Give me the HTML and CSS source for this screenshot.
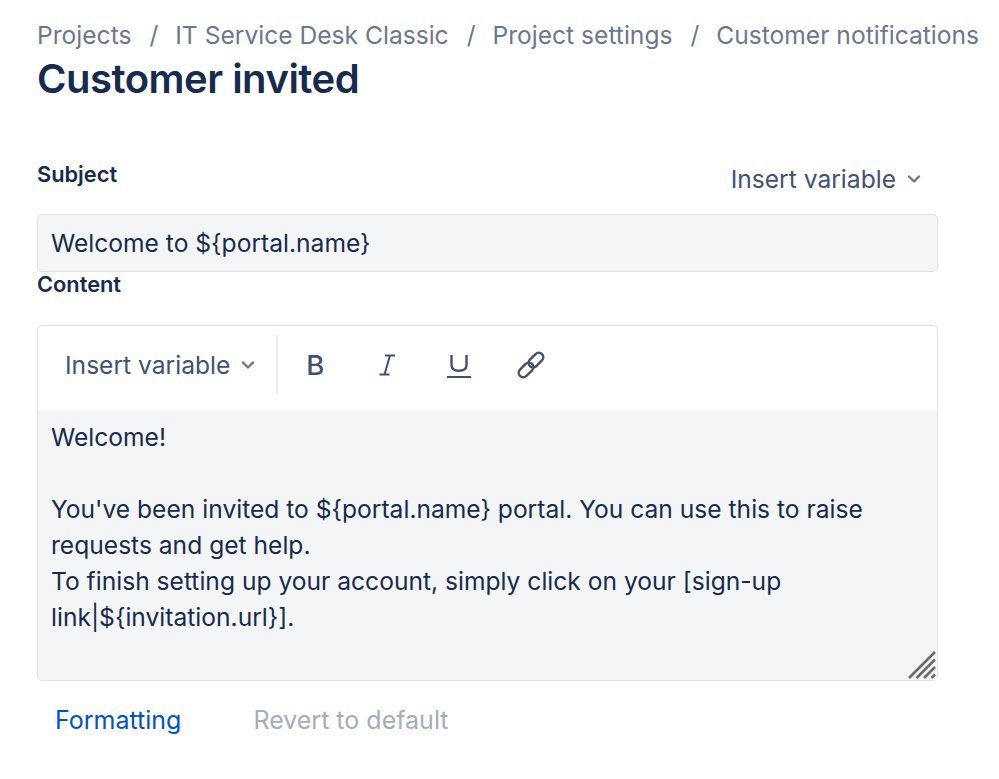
FILE: index.html
```html
<!DOCTYPE html>
<html lang="en">
<head>
    <meta charset="UTF-8">
    <meta name="viewport" content="width=device-width, initial-scale=1.0">
    <title>Customer invited</title>
    <link rel="stylesheet" href="styles.css">
</head>
<body>
    <div class="page">
        <nav class="breadcrumbs">
            <span>Projects</span><span class="sep">/</span>
            <span>IT Service Desk Classic</span><span class="sep">/</span>
            <span>Project settings</span><span class="sep">/</span>
            <span>Customer notifications</span>
        </nav>
        <h1>Customer invited</h1>

        <div class="subject-head">
            <label class="field-label">Subject</label>
            <div class="insert-var">
                Insert variable
                <svg class="chevron" viewBox="0 0 14 10" width="14" height="10"><path d="M2 2.500 7 7.500 12 2.500" fill="none" stroke="#6b778c" stroke-width="2.400" stroke-linecap="round" stroke-linejoin="round"/></svg>
            </div>
        </div>
        <div class="subject-input">Welcome to ${portal.name}</div>

        <label class="field-label content-label">Content</label>
        <div class="editor">
            <div class="toolbar">
                <div class="insert-var toolbar-var">
                    Insert variable
                    <svg class="chevron" viewBox="0 0 14 10" width="14" height="10"><path d="M2 2.500 7 7.500 12 2.500" fill="none" stroke="#6b778c" stroke-width="2.400" stroke-linecap="round" stroke-linejoin="round"/></svg>
                </div>
                <div class="tools">
                    <span class="tool tool-bold">B</span>
                    <span class="tool"><svg viewBox="0 0 24 24" width="24" height="24"><path d="M10 2.500h10M4.500 21.500h10M15 2.500 9.500 21.500" fill="none" stroke="#42526e" stroke-width="2"/></svg></span>
                    <span class="tool"><svg viewBox="0 0 24 28" width="24" height="28"><path d="M4.500 4v10c0 3.600 2.600 5.800 7.500 5.800s7.500-2.200 7.500-5.800V4" fill="none" stroke="#42526e" stroke-width="2.400"/><path d="M0 26h24" stroke="#42526e" stroke-width="2"/></svg></span>
                    <span class="tool"><svg viewBox="0 0 28 28" width="28" height="28"><g fill="none" stroke="#42526e" stroke-width="2.400" transform="rotate(-45 14 14)"><rect x="-1.500" y="9.500" width="17" height="9" rx="4.500"/><rect x="12.500" y="9.500" width="17" height="9" rx="4.500"/></g></svg></span>
                </div>
            </div>
            <div class="editor-body">
                <p>Welcome!</p>
                <p>&nbsp;</p>
                <p>You've been invited to ${portal.name} portal. You can use this to raise<br>requests and get help.</p>
                <p>To finish setting up your account, simply click on your [sign-up<br>link|${invitation.url}].</p>
                <svg class="grip" viewBox="0 0 28 28" width="28" height="28"><path d="M1 27 27 1M8.500 27 27 8.500M16 27 27 16M23.500 27 27 23.500" stroke="#6b6b6b" stroke-width="2.600"/></svg>
            </div>
        </div>

        <div class="actions">
            <a class="link">Formatting</a>
            <a class="link-disabled">Revert to default</a>
        </div>
    </div>
</body>
</html>
```

FILE: styles.css
```css
body {
    font-family: Inter, "Liberation Sans", sans-serif;
    font-size: 24.6px;
    line-height: 36px;
    color: #172b4d;
    background: #fff;
    margin: 0;
}
.page {
    width: 901px;
    padding: 17px 0 0 37px;
}
.breadcrumbs {
    color: #6b778c;
    font-size: 24.6px;
    white-space: nowrap;
    height: 36px;
}
.sep {
    margin: 0 10px 0 18px;
}
h1 {
    font-size: 40px;
    line-height: 52px;
    font-weight: 600;
    letter-spacing: -0.5px;
    margin: 0;
}
.subject-head {
    display: flex;
    justify-content: space-between;
    margin-top: 36px;
    height: 73px;
}
.field-label {
    font-size: 21.8px;
    font-weight: 600;
    line-height: 36px;
    padding-top: 15px;
}
.insert-var {
    color: #42526e;
    display: flex;
    align-items: center;
    gap: 11px;
    height: 36px;
    margin-top: 20px;
    margin-right: 17px;
}
.subject-input {
    height: 56px;
    background: #f4f5f7;
    border: 1px solid #dfe1e6;
    border-radius: 5px;
    padding: 0 13px;
    line-height: 56px;
}
.content-label {
    display: block;
    height: 53px;
    line-height: 25px;
    padding-top: 0;
}
.editor {
    height: 354px;
    border: 1px solid #dfe1e6;
    border-radius: 5px;
    overflow: hidden;
}
.toolbar {
    height: 77px;
    display: flex;
    align-items: center;
    padding: 0 0 8px 27px;
}
.toolbar-var {
    margin: 0;
    height: 59px;
    padding-right: 21px;
    border-right: 2px solid #ebecf0;
}
.tools {
    display: flex;
    align-items: center;
    margin-left: 1px;
}
.tool {
    width: 72px;
    display: flex;
    justify-content: center;
    align-items: center;
    color: #42526e;
}
.tool-bold {
    font-size: 27.5px;
    font-weight: 500;
}
.editor-body {
    position: relative;
    height: 261px;
    background: #f4f5f7;
    padding: 8px 13px 0;
}
.editor-body p {
    margin: 0;
}
.grip {
    position: absolute;
    right: 1px;
    bottom: 1px;
}
.actions {
    display: flex;
    gap: 72px;
    font-size: 25px;
    padding: 21px 0 0 18px;
}
.link {
    color: #0052cc;
}
.link-disabled {
    color: #a5adba;
}
```
